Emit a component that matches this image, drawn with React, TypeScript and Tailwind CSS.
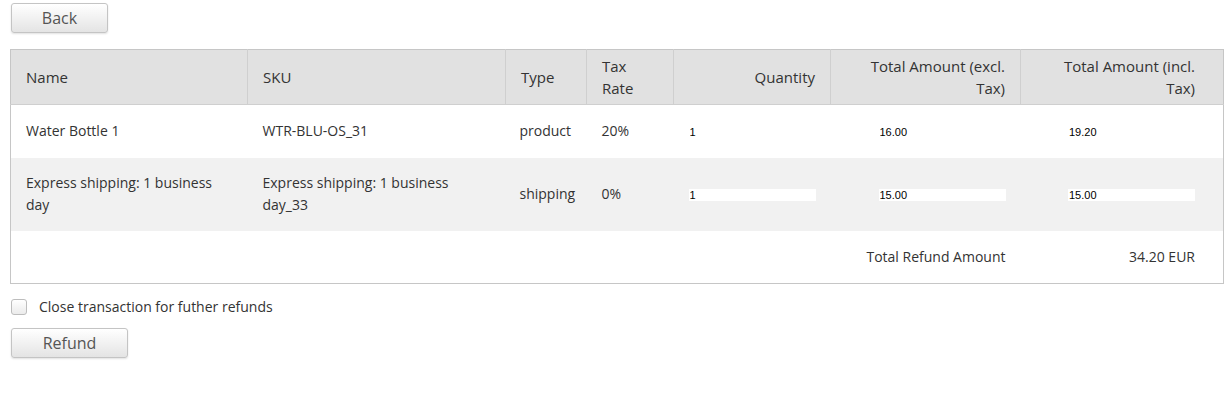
import { useState } from "react";

interface RefundLine {
    name: string;
    sku: string;
    type: string;
    taxRate: string;
    quantity: string;
    totalExcl: string;
    totalIncl: string;
}

const lines: RefundLine[] = [
    {
        name: "Water Bottle 1",
        sku: "WTR-BLU-OS_31",
        type: "product",
        taxRate: "20%",
        quantity: "1",
        totalExcl: "16.00",
        totalIncl: "19.20",
    },
    {
        name: "Express shipping: 1 business day",
        sku: "Express shipping: 1 business day_33",
        type: "shipping",
        taxRate: "0%",
        quantity: "1",
        totalExcl: "15.00",
        totalIncl: "15.00",
    },
];

const buttonClass =
    "h-[30px] rounded-[3px] border border-[#c4c4c4] bg-gradient-to-b from-white to-[#e4e4e4] text-[16px] text-[#555] shadow-[0_1px_2px_rgba(0,0,0,0.12)]";

const thClass =
    "border-r border-[#cfcfcf] px-[15px] font-normal align-middle leading-[22px]";

const inputClass =
    "h-[12px] w-[127px] bg-white px-px font-['Liberation_Sans',Arial,sans-serif] text-[11px] leading-[12px] text-black outline-none";

export default function App() {
    const [closeTx, setCloseTx] = useState(false);

    return (
        <div className="min-h-[393px] bg-white px-[10px] pt-[3px] font-['Open_Sans',sans-serif] text-[14px] text-[#333]">
            <button className={`${buttonClass} ml-px block w-[97px] leading-[28px]`}>
                Back
            </button>

            <table className="mt-[16px] w-[1213px] table-fixed border-collapse border border-[#c6c6c6]">
                <colgroup>
                    <col className="w-[237px]" />
                    <col className="w-[258px]" />
                    <col className="w-[81px]" />
                    <col className="w-[87px]" />
                    <col className="w-[157px]" />
                    <col className="w-[190px]" />
                    <col className="w-[203px]" />
                </colgroup>
                <thead>
                    <tr className="h-[55px] border-b border-[#cfcfcf] bg-[#e1e1e1] text-[15px]">
                        <th className={`${thClass} text-left`}>Name</th>
                        <th className={`${thClass} text-left`}>SKU</th>
                        <th className={`${thClass} text-left`}>Type</th>
                        <th className={`${thClass} text-left`}>
                            Tax
                            <br />
                            Rate
                        </th>
                        <th className={`${thClass} text-right`}>Quantity</th>
                        <th className={`${thClass} text-right`}>
                            Total Amount (excl.
                            <br />
                            Tax)
                        </th>
                        <th className="pr-[28px] pl-[15px] text-right font-normal leading-[22px]">
                            Total Amount (incl.
                            <br />
                            Tax)
                        </th>
                    </tr>
                </thead>
                <tbody className="leading-[22px]">
                    {lines.map((l, i) => (
                        <tr
                            key={l.sku}
                            className={
                                i % 2 === 0
                                    ? "h-[53px] bg-white"
                                    : "h-[73px] bg-[#f1f1f1]"
                            }
                        >
                            <td className="px-[15px]">{l.name}</td>
                            <td className="px-[15px]">{l.sku}</td>
                            <td className="px-[14px]">{l.type}</td>
                            <td className="px-[15px]">{l.taxRate}</td>
                            <td className="px-[15px] text-right">
                                <input
                                    className={inputClass}
                                    defaultValue={l.quantity}
                                />
                            </td>
                            <td className="px-[15px] text-right">
                                <input
                                    className={inputClass}
                                    defaultValue={l.totalExcl}
                                />
                            </td>
                            <td className="pr-[28px] pl-[15px] text-right">
                                <input
                                    className={inputClass}
                                    defaultValue={l.totalIncl}
                                />
                            </td>
                        </tr>
                    ))}
                    <tr className="h-[53px] bg-white">
                        <td colSpan={5} />
                        <td className="px-[15px] text-right">
                            Total Refund Amount
                        </td>
                        <td className="pr-[28px] pl-[15px] text-right">
                            34.20 EUR
                        </td>
                    </tr>
                </tbody>
            </table>

            <label className="mt-[14px] ml-px flex items-center gap-[12px] leading-[18px]">
                <input
                    type="checkbox"
                    checked={closeTx}
                    onChange={(e) => setCloseTx(e.target.checked)}
                    className="h-[16px] w-[16px] appearance-none rounded-[3px] border border-[#bdbdbd] bg-gradient-to-b from-white to-[#ebebeb] checked:bg-[#4a90d9]"
                />
                <span>Close transaction for futher refunds</span>
            </label>

            <button className={`${buttonClass} mt-[12px] ml-px block w-[117px] leading-[28px]`}>
                Refund
            </button>
        </div>
    );
}
